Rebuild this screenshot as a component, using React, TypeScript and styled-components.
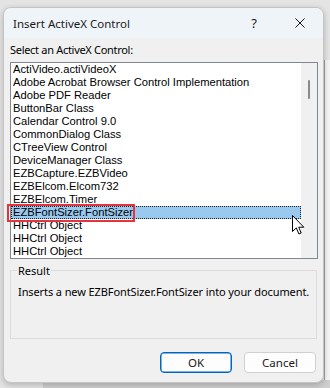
import React from 'react';
import styled, { createGlobalStyle } from 'styled-components';

const items = [
  'ActiVideo.actiVideoX',
  'Adobe Acrobat Browser Control Implementation',
  'Adobe PDF Reader',
  'ButtonBar Class',
  'Calendar Control 9.0',
  'CommonDialog Class',
  'CTreeView Control',
  'DeviceManager Class',
  'EZBCapture.EZBVideo',
  'EZBElcom.Elcom732',
  'EZBElcom.Timer',
  'EZBFontSizer.FontSizer',
  'HHCtrl Object',
  'HHCtrl Object',
  'HHCtrl Object',
];

const SELECTED = 11;

function Cursor() {
  return (
    <CursorWrap>
      <svg width="13" height="20" viewBox="0 0 13 20">
        <path
          d="M0.5 0.5 L0.5 16.5 L4.3 12.9 L6.9 19 L9.2 18 L6.7 12.2 L11.8 12.2 Z"
          fill="#fff"
          stroke="#000"
          strokeWidth="1"
          strokeLinejoin="round"
        />
      </svg>
    </CursorWrap>
  );
}

export default function App() {
  return (
    <>
      <GlobalStyle />
      <Screen>
        <BackRight />
        <BackBottom />
        <Dialog>
          <TitleBar>
            <Title>Insert ActiveX Control</Title>
            <TitleButtons>
              <HelpMark>?</HelpMark>
              <CloseMark>
                <svg width="10" height="10" viewBox="0 0 10 10">
                  <path d="M0.5 0.5 L9.5 9.5 M9.5 0.5 L0.5 9.5" stroke="#1a1a1a" strokeWidth="1" />
                </svg>
              </CloseMark>
            </TitleButtons>
          </TitleBar>
          <Body>
            <Caption>Select an ActiveX Control:</Caption>
            <ListBox>
              <Items>
                {items.map((name, i) => (
                  <Item key={i} selected={i === SELECTED}>
                    {name}
                  </Item>
                ))}
              </Items>
              <ScrollTrack>
                <Thumb />
              </ScrollTrack>
            </ListBox>
            <Group>
              <Legend>Result</Legend>
              <ResultText>Inserts a new EZBFontSizer.FontSizer into your document.</ResultText>
            </Group>
            <Buttons>
              <Button primary>OK</Button>
              <Button>Cancel</Button>
            </Buttons>
          </Body>
        </Dialog>
        <RedMark />
        <Cursor />
      </Screen>
    </>
  );
}

const uiFont = `"Noto Sans", "Liberation Sans", sans-serif`;

const GlobalStyle = createGlobalStyle`
  body {
    margin: 0;
    background: #e4e4e4;
    font-family: ${uiFont};
  }
`;

const Screen = styled.div`
  position: relative;
  width: 330px;
  height: 388px;
  overflow: hidden;
  background: #e4e4e4;
  padding: 7px 0 0 3px;
  box-sizing: border-box;
`;

const BackRight = styled.div`
  position: absolute;
  left: 324px;
  top: 60px;
  width: 6px;
  height: 328px;
  background: #f4f4f4;
  border-left: 1px solid #a0a0a0;
`;

const BackBottom = styled.div`
  position: absolute;
  left: 43px;
  top: 380px;
  width: 287px;
  height: 8px;
  background: #cfcfcf;
`;

const Dialog = styled.div`
  position: relative;
  z-index: 1;
  width: 321px;
  height: 376px;
  box-sizing: border-box;
  border: 1px solid #c4c4c4;
  border-radius: 8px;
  background: #f0f0f0;
  box-shadow: 0 2px 6px rgba(0, 0, 0, 0.22);
  overflow: hidden;
  display: flex;
  flex-direction: column;
`;

const TitleBar = styled.div`
  height: 30px;
  background: #eff4f9;
  display: flex;
  align-items: center;
  justify-content: space-between;
  padding: 0 0 0 9px;
  flex-shrink: 0;
`;

const Title = styled.div`
  font-family: ${uiFont};
  font-size: 11.5px;
  color: #1a1a1a;
`;

const TitleButtons = styled.div`
  display: flex;
  align-items: center;
  height: 100%;
`;

const HelpMark = styled.div`
  width: 46px;
  text-align: center;
  font-family: ${uiFont};
  font-size: 13px;
  color: #1a1a1a;
`;

const CloseMark = styled.div`
  width: 46px;
  display: flex;
  justify-content: center;
  align-items: center;
`;

const Body = styled.div`
  padding: 5px 6px 0 6px;
  display: flex;
  flex-direction: column;
  flex: 1;
`;

const Caption = styled.div`
  font-family: ${uiFont};
  font-size: 11px;
  letter-spacing: -0.3px;
  color: #000;
  height: 19px;
  line-height: 14px;
`;

const ListBox = styled.div`
  display: flex;
  width: 308px;
  height: 197px;
  box-sizing: border-box;
  border: 1px solid #82878f;
  background: #fff;
`;

const Items = styled.div`
  flex: 1;
  overflow: hidden;
`;

const Item = styled.div<{ selected?: boolean }>`
  height: 13px;
  line-height: 13px;
  padding-left: 2px;
  font-family: "Liberation Sans", sans-serif;
  font-size: 11.2px;
  color: #000;
  white-space: nowrap;
  box-sizing: border-box;
  background: ${(p) => (p.selected ? '#99c9ef' : 'transparent')};
  outline: ${(p) => (p.selected ? '1px dotted #222' : 'none')};
  outline-offset: -1px;
`;

const ScrollTrack = styled.div`
  width: 16px;
  background: #f0f0f0;
  position: relative;
  flex-shrink: 0;
`;

const Thumb = styled.div`
  position: absolute;
  left: 7px;
  top: 17px;
  width: 2px;
  height: 19px;
  border-radius: 1px;
  background: #8a8a8a;
`;

const Group = styled.fieldset`
  margin: 4px 0 0 0;
  width: 307px;
  height: 76px;
  box-sizing: border-box;
  border: 1px solid #dcdcdc;
  padding: 0 7px;
`;

const Legend = styled.legend`
  font-family: ${uiFont};
  font-size: 11px;
  color: #000;
  padding: 0 1px;
  margin-left: -1px;
`;

const ResultText = styled.div`
  font-family: ${uiFont};
  font-size: 11px;
  letter-spacing: -0.1px;
  color: #000;
  margin-top: 6px;
  white-space: nowrap;
`;

const Buttons = styled.div`
  display: flex;
  justify-content: flex-end;
  gap: 12px;
  margin-top: 13px;
  padding-right: 1px;
`;

const Button = styled.button<{ primary?: boolean }>`
  width: 72px;
  height: 21px;
  box-sizing: border-box;
  border-radius: 4px;
  background: #fdfdfd;
  border: 1px solid ${(p) => (p.primary ? '#0067c0' : '#d0d0d0')};
  box-shadow: ${(p) => (p.primary ? 'inset 0 0 0 0.5px #0067c0' : 'none')};
  font-family: ${uiFont};
  font-size: 11.5px;
  color: #1a1a1a;
  padding: 0;
`;

const RedMark = styled.div`
  position: absolute;
  z-index: 2;
  left: 7px;
  top: 204px;
  width: 128px;
  height: 18px;
  box-sizing: border-box;
  border: 2px solid #e8333a;
`;

const CursorWrap = styled.div`
  position: absolute;
  z-index: 3;
  left: 292px;
  top: 215px;
  line-height: 0;
`;
